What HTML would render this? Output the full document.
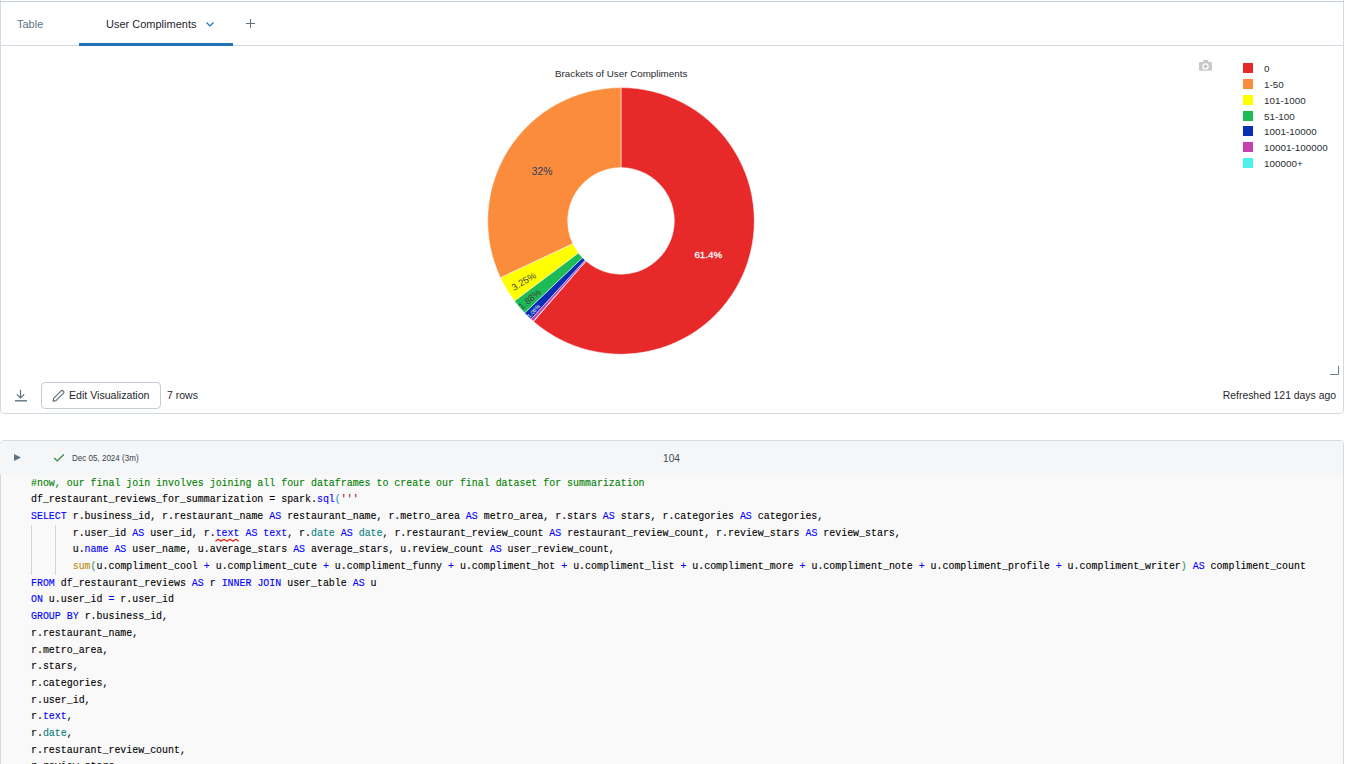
<!DOCTYPE html>
<html><head><meta charset="utf-8">
<style>
html,body{margin:0;padding:0;background:#fff;width:1348px;height:764px;overflow:hidden;position:relative;font-family:"Liberation Sans",sans-serif;}
.a{position:absolute;white-space:nowrap;}
#card{position:absolute;left:0;top:-6px;width:1342px;height:418px;border:1px solid #d3dae2;border-radius:4px;background:#fff;}
#tabline{position:absolute;left:0;top:1px;width:1344px;height:1px;background:#c6d0da;}
#tabbottom{position:absolute;left:1px;top:45px;width:1342px;height:1px;background:#d3dae2;}
#uline{position:absolute;left:79px;top:43px;width:154px;height:3px;background:#2272b4;}
.tab{font-size:11px;line-height:13px;}
.leg{font-size:9.9px;color:#2a2f33;line-height:13px;}
.sw{position:absolute;width:10px;height:10px;left:1243px;}
#cell{position:absolute;left:0;top:440px;width:1342px;height:400px;border:1px solid #d3dae2;border-radius:4px;background:#f9f9f9;overflow:hidden;}
#cellhead{position:absolute;left:0;top:0;width:1342px;height:34px;background:#f4f6f8;}
.code{position:absolute;left:31px;font-family:"Liberation Mono",monospace;font-size:11px;line-height:16.7px;transform:scaleX(0.9024);-webkit-text-stroke:0.12px currentColor;transform-origin:0 0;color:#000;white-space:pre;}
.k{color:#0000ff}.c{color:#008000}.s{color:#a31515}.t{color:#0b8080}.f{color:#c08c10}.p1{color:#319ad0}.p2{color:#3d8f6a}
</style></head><body>
<div id="card"></div>
<div id="tabline"></div>
<div id="tabbottom"></div>
<div id="uline"></div>
<div class="a tab" style="left:17px;top:18px;color:#5f7281;">Table</div>
<div class="a tab" style="left:106px;top:18px;color:#1f272d;">User Compliments</div>
<svg class="a" style="left:205px;top:20px" width="10" height="8" viewBox="0 0 10 8"><path d="M1.5,2.5 L5,6 L8.5,2.5" fill="none" stroke="#2272b4" stroke-width="1.2"/></svg>
<svg class="a" style="left:245px;top:18px" width="11" height="11" viewBox="0 0 11 11"><path d="M5.5,1 V10 M1,5.5 H10" fill="none" stroke="#5f7281" stroke-width="1"/></svg>

<!-- chart -->
<div class="a" style="left:555px;top:68px;font-size:9.8px;color:#282c30;line-height:12px;">Brackets of User Compliments</div>
<svg class="a" style="left:0;top:0" width="1348" height="380">
<g stroke="#fff" stroke-width="0.5">
<path fill="#e8292a" d="M621.00,87.60 A133.3,133.3 0 1 1 533.48,321.44 L586.00,261.10 A53.3,53.3 0 1 0 621.00,167.60 Z"/>
<path fill="#4ef2ea" d="M533.48,321.44 A133.3,133.3 0 0 1 533.16,321.17 L585.88,260.99 A53.3,53.3 0 0 0 586.00,261.10 Z"/>
<path fill="#c840ad" d="M533.16,321.17 A133.3,133.3 0 0 1 530.94,319.18 L584.99,260.20 A53.3,53.3 0 0 0 585.88,260.99 Z"/>
<path fill="#062db4" d="M530.94,319.18 A133.3,133.3 0 0 1 524.63,312.99 L582.47,257.72 A53.3,53.3 0 0 0 584.99,260.20 Z"/>
<path fill="#1dbb55" d="M524.63,312.99 A133.3,133.3 0 0 1 514.40,300.94 L578.38,252.90 A53.3,53.3 0 0 0 582.47,257.72 Z"/>
<path fill="#ffff00" d="M514.40,300.94 A133.3,133.3 0 0 1 500.39,277.66 L572.77,243.59 A53.3,53.3 0 0 0 578.38,252.90 Z"/>
<path fill="#fb8c3c" d="M500.39,277.66 A133.3,133.3 0 0 1 621.00,87.60 L621.00,167.60 A53.3,53.3 0 0 0 572.77,243.59 Z"/>
</g>
<g font-family="Liberation Sans" text-anchor="middle">
<text x="542" y="175" font-size="10.3" fill="#2a3f5f">32%</text>
<text x="708.3" y="257.8" font-size="9.8" fill="#fff" stroke="#fff" stroke-width="0.3">61.4%</text>
<text transform="translate(523.8,281.2) rotate(-31)" y="3.3" font-size="9.4" fill="#444">3.25%</text>
<text transform="translate(529.7,299.2) rotate(-40.2)" y="3.2" font-size="9.2" fill="#444">1.88%</text>
<text transform="translate(533.5,311) rotate(-45.5)" y="2" font-size="5.5" fill="#fff">1.06%</text>
</g>
<!-- camera -->
<rect x="1199" y="62" width="13" height="8.8" rx="1.2" fill="#c8c8c8"/>
<path d="M1202.8,62.5 L1203.6,60 H1207.8 L1208.8,62.5 Z" fill="#c8c8c8"/>
<circle cx="1205.5" cy="66.4" r="3.2" fill="#fff"/>
<circle cx="1205.5" cy="66.4" r="1.9" fill="#c8c8c8"/>
<circle cx="1210.4" cy="63.9" r="0.5" fill="#eee"/>
<!-- resize handle -->
<path d="M1330,374.5 H1338.5 V366" fill="none" stroke="#6b7c8a" stroke-width="1"/>
</svg>
<div class="sw" style="top:63px;background:#e8292a"></div>
<div class="sw" style="top:79px;background:#fb8c3c"></div>
<div class="sw" style="top:95px;background:#ffff00"></div>
<div class="sw" style="top:111px;background:#1dbb55"></div>
<div class="sw" style="top:126px;background:#062db4"></div>
<div class="sw" style="top:142px;background:#c840ad"></div>
<div class="sw" style="top:158px;background:#4ef2ea"></div>
<div class="a leg" style="left:1264px;top:62px">0</div>
<div class="a leg" style="left:1264px;top:78px">1-50</div>
<div class="a leg" style="left:1264px;top:94px">101-1000</div>
<div class="a leg" style="left:1264px;top:110px">51-100</div>
<div class="a leg" style="left:1264px;top:125px">1001-10000</div>
<div class="a leg" style="left:1264px;top:141px">10001-100000</div>
<div class="a leg" style="left:1264px;top:157px">100000+</div>

<!-- footer -->
<svg class="a" style="left:13px;top:387px" width="16" height="16" viewBox="0 0 16 16"><path d="M7.5,2.8 V11 M3.8,7.3 L7.5,11 L11.2,7.3" fill="none" stroke="#5f7281" stroke-width="1.2"/><path d="M2,13.8 H14" fill="none" stroke="#5f7281" stroke-width="1.4"/></svg>
<div class="a" style="left:41px;top:382px;width:118px;height:25px;border:1px solid #c3ccd6;border-radius:4px;background:#fff;"></div>
<svg class="a" style="left:51px;top:389px" width="15" height="14" viewBox="0 0 15 14"><path d="M2.2,12.2 L2.6,9.4 L10.2,1.8 Q11,1 11.9,1.8 L12.6,2.5 Q13.4,3.3 12.6,4.1 L5,11.7 Z" fill="none" stroke="#5f7281" stroke-width="1.2" stroke-linejoin="round"/></svg>
<div class="a" style="left:69px;top:388.5px;font-size:10.6px;color:#1f272d;line-height:13px;">Edit Visualization</div>
<div class="a" style="left:167px;top:388.5px;font-size:10.5px;color:#1f272d;line-height:13px;">7 rows</div>
<div class="a" style="right:12px;top:389px;font-size:10.4px;color:#1f272d;line-height:13px;">Refreshed 121 days ago</div>

<!-- code cell -->
<div id="cell">
 <div id="cellhead"></div>
</div>
<div class="a" style="left:0;top:444px;width:1px;height:30px;background:#f4f6f8"></div>
<svg class="a" style="left:13px;top:453px" width="9" height="9" viewBox="0 0 9 9"><path d="M1,1 L8,4.5 L1,8 Z" fill="#5f7281"/></svg>
<svg class="a" style="left:53px;top:453px" width="12" height="10" viewBox="0 0 12 10"><path d="M1.2,5 L4.2,8 L10.8,1.5" fill="none" stroke="#2e8540" stroke-width="1.2"/></svg>
<div class="a" style="left:72px;top:452.8px;font-size:8.7px;color:#39434d;line-height:10px;transform:scaleX(0.925);transform-origin:0 0;">Dec 05, 2024 (3m)</div>
<div class="a" style="left:663px;top:453px;font-size:10.2px;color:#444c55;line-height:12px;">104</div>

<div class="code" style="top:474.5px"><span class="c">#now, our final join involves joining all four dataframes to create our final dataset for summarization</span>
df_restaurant_reviews_for_summarization = spark.<span class="k">sql</span><span class="p1">(</span><span class="s">'''</span>
<span class="k">SELECT</span> r.business_id, r.restaurant_name <span class="k">AS</span> restaurant_name, r.metro_area <span class="k">AS</span> metro_area, r.stars <span class="k">AS</span> stars, r.categories <span class="k">AS</span> categories,
       r.user_id <span class="k">AS</span> user_id, r.<span class="k">text</span> <span class="k">AS</span> <span class="k">text</span>, r.<span class="t">date</span> <span class="k">AS</span> <span class="t">date</span>, r.restaurant_review_count <span class="k">AS</span> restaurant_review_count, r.review_stars <span class="k">AS</span> review_stars,
       u.<span class="k">name</span> <span class="k">AS</span> user_name, u.average_stars <span class="k">AS</span> average_stars, u.review_count <span class="k">AS</span> user_review_count,
       <span class="f">sum</span><span class="p2">(</span>u.compliment_cool <span class="k">+</span> u.compliment_cute <span class="k">+</span> u.compliment_funny <span class="k">+</span> u.compliment_hot <span class="k">+</span> u.compliment_list <span class="k">+</span> u.compliment_more <span class="k">+</span> u.compliment_note <span class="k">+</span> u.compliment_profile <span class="k">+</span> u.compliment_writer<span class="p2">)</span> <span class="k">AS</span> compliment_count
<span class="k">FROM</span> df_restaurant_reviews <span class="k">AS</span> r <span class="k">INNER</span> <span class="k">JOIN</span> user_table <span class="k">AS</span> u
<span class="k">ON</span> u.user_id <span class="k">=</span> r.user_id
<span class="k">GROUP</span> <span class="k">BY</span> r.business_id,
r.restaurant_name,
r.metro_area,
r.stars,
r.categories,
r.user_id,
r.<span class="k">text</span>,
r.<span class="t">date</span>,
r.restaurant_review_count,
r.review_stars,
</div>
<!-- indent guides -->
<div class="a" style="left:31px;top:525px;width:1px;height:50px;background:#d4d4d4"></div>
<div class="a" style="left:55px;top:525px;width:1px;height:50px;background:#d4d4d4"></div>
<!-- squiggle -->
<svg class="a" style="left:214px;top:537px" width="28" height="7" viewBox="0 0 28 7"><path d="M1.5,4.3 L4,2.3 L7,4.3 L10,2.3 L13,4.3 L16,2.3 L19,4.3 L22,2.3 L24.5,4.3" fill="none" stroke="#e51400" stroke-width="1.1" stroke-linejoin="round"/></svg>
</body></html>
